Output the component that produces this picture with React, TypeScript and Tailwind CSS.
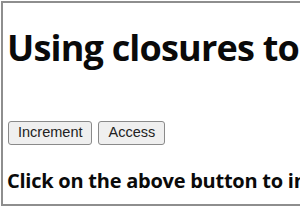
export default function App() {
  return (
    <div className="w-[300px] h-[210px] bg-white overflow-hidden relative">
      <div className="mt-px ml-px h-[205px] w-[320px] border-2 border-r-0 border-[#8e8e8e] bg-white overflow-hidden">
        <div className="pl-[4px] whitespace-nowrap">
          <h1 className="pt-[21px] text-[36px] leading-[48px] font-bold text-[#0a0a0a] tracking-[-0.8px]" style={{ fontFamily: '"Open Sans", sans-serif' }}>
            Using closures to implement counters
          </h1>
          <div className="mt-[49px] ml-px flex gap-[6px]" style={{ fontFamily: '"Liberation Sans", Arial, sans-serif' }}>
            <button className="h-[24px] px-[9px] text-[14.5px] text-[#222] bg-[#efefef] border border-[#8a8a8a] rounded-[3px]">Increment</button>
            <button className="h-[24px] px-[9px] text-[14.5px] text-[#222] bg-[#efefef] border border-[#8a8a8a] rounded-[3px]">Access</button>
          </div>
          <p className="mt-[24px] text-[20px] leading-[24px] font-bold text-[#0a0a0a] tracking-[-0.25px]" style={{ fontFamily: '"Open Sans", sans-serif' }}>
            Click on the above button to increment and access
          </p>
        </div>
      </div>
    </div>
  );
}
